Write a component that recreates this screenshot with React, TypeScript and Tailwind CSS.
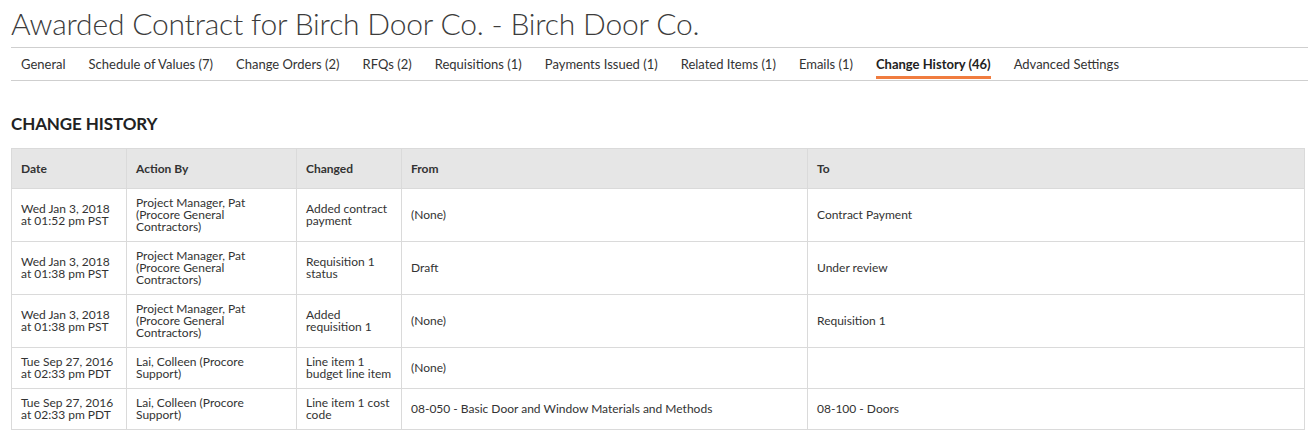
import React from "react";

const tabs = [
  "General",
  "Schedule of Values (7)",
  "Change Orders (2)",
  "RFQs (2)",
  "Requisitions (1)",
  "Payments Issued (1)",
  "Related Items (1)",
  "Emails (1)",
  "Change History (46)",
  "Advanced Settings",
];

type Row = { date: string[]; by: string[]; changed: string[]; from: string; to: string };

const rows: Row[] = [
  {
    date: ["Wed Jan 3, 2018", "at 01:52 pm PST"],
    by: ["Project Manager, Pat", "(Procore General", "Contractors)"],
    changed: ["Added contract", "payment"],
    from: "(None)",
    to: "Contract Payment",
  },
  {
    date: ["Wed Jan 3, 2018", "at 01:38 pm PST"],
    by: ["Project Manager, Pat", "(Procore General", "Contractors)"],
    changed: ["Requisition 1", "status"],
    from: "Draft",
    to: "Under review",
  },
  {
    date: ["Wed Jan 3, 2018", "at 01:38 pm PST"],
    by: ["Project Manager, Pat", "(Procore General", "Contractors)"],
    changed: ["Added", "requisition 1"],
    from: "(None)",
    to: "Requisition 1",
  },
  {
    date: ["Tue Sep 27, 2016", "at 02:33 pm PDT"],
    by: ["Lai, Colleen (Procore", "Support)"],
    changed: ["Line item 1", "budget line item"],
    from: "(None)",
    to: "",
  },
  {
    date: ["Tue Sep 27, 2016", "at 02:33 pm PDT"],
    by: ["Lai, Colleen (Procore", "Support)"],
    changed: ["Line item 1 cost", "code"],
    from: "08-050 - Basic Door and Window Materials and Methods",
    to: "08-100 - Doors",
  },
];

function Lines({ lines }: { lines: string[] }) {
  return (
    <div className="leading-[12px]">
      {lines.map((l, i) => (
        <div key={i}>{l}</div>
      ))}
    </div>
  );
}

export default function App() {
  return (
    <div
      className="bg-white text-[#333] pl-[11px] pr-[4px] h-[432px] overflow-hidden"
      style={{ fontFamily: "Lato, 'Open Sans', sans-serif" }}
    >
      <h1 className="pt-[5px] text-[30px] leading-[36px] font-light text-[#3c3c3c] tracking-[-0.2px]">
        Awarded Contract for Birch Door Co. - Birch Door Co.
      </h1>
      <div className="mt-[6px] border-t border-b border-[#cfcfcf] h-[34px] flex items-stretch pl-[10px] gap-[23px] mr-[-4px]">
        {tabs.map((t) => {
          const active = t.startsWith("Change History");
          return (
            <div
              key={t}
              className={
                "flex items-center pt-[2px] text-[13px] relative " +
                (active ? "font-bold text-[#222]" : "text-[#333]")
              }
            >
              {t}
              {active && (
                <div className="absolute left-0 right-0 bottom-[1px] h-[3px] bg-[#f07c3f]" />
              )}
            </div>
          );
        })}
      </div>
      <h2 className="mt-[33px] text-[17px] leading-[20px] font-bold text-[#222] tracking-[-0.1px]">
        CHANGE HISTORY
      </h2>
      <table className="mt-[14px] border-collapse text-[12px] w-[1293px] table-fixed">
        <colgroup>
          <col className="w-[115px]" />
          <col className="w-[170px]" />
          <col className="w-[105px]" />
          <col className="w-[406px]" />
          <col className="w-[497px]" />
        </colgroup>
        <thead>
          <tr className="bg-[#e6e6e6] h-[40px] text-left">
            {["Date", "Action By", "Changed", "From", "To"].map((h) => (
              <th
                key={h}
                className="border border-[#dadada] px-[9px] font-bold text-[#333] align-middle"
              >
                {h}
              </th>
            ))}
          </tr>
        </thead>
        <tbody>
          {rows.map((r, i) => (
            <tr key={i}>
              <td className="border border-[#dadada] px-[9px] py-[8px] align-middle">
                <Lines lines={r.date} />
              </td>
              <td className="border border-[#dadada] px-[9px] py-[8px] align-middle">
                <Lines lines={r.by} />
              </td>
              <td className="border border-[#dadada] px-[9px] py-[8px] align-middle">
                <Lines lines={r.changed} />
              </td>
              <td className="border border-[#dadada] px-[9px] py-[8px] align-middle">
                {r.from}
              </td>
              <td className="border border-[#dadada] px-[9px] py-[8px] align-middle">
                {r.to}
              </td>
            </tr>
          ))}
        </tbody>
      </table>
    </div>
  );
}
